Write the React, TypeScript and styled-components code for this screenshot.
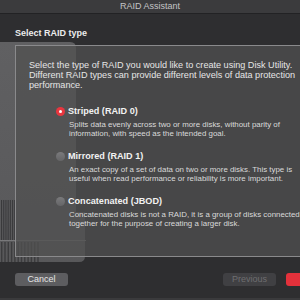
import React from "react";
import styled, { createGlobalStyle } from "styled-components";

const Global = createGlobalStyle`
  html, body { margin: 0; padding: 0; background: #2e2e30; }
  body { width: 300px; height: 300px; overflow: hidden; font-family: "Liberation Sans", Arial, sans-serif; }
  * { box-sizing: border-box; }
`;

const Window = styled.div`
  width: 300px;
  height: 300px;
  overflow: hidden;
  background: #2e2e30;
  display: flex;
  flex-direction: column;
`;

const TitleBar = styled.div`
  height: 14px;
  flex: none;
  background: #3b3b3d;
  border-bottom: 1px solid #222224;
  display: flex;
  align-items: center;
  justify-content: center;
  color: #c4c4c6;
  font-size: 9px;
  line-height: 13px;
`;

const SectionTitle = styled.div`
  padding: 14px 0 0 15px;
  height: 31px;
  flex: none;
  color: #ececec;
  font-size: 9px;
  font-weight: 700;
  line-height: 11px;
`;

const Stage = styled.div`
  position: relative;
  height: 212px;
  flex: none;
`;

const Art = styled.svg`
  position: absolute;
  left: 0;
  top: -3px;
  width: 90px;
  height: 220px;
`;

const Panel = styled.div`
  position: relative;
  height: 212px;
  margin: 0 -20px 0 15px;
  border: 1px solid #8a8a8c;
  background: rgba(80, 80, 80, 0.75);
  padding: 14px 0 0 13px;
`;

const Intro = styled.p`
  margin: 0;
  width: 275px;
  color: #e6e6e6;
  font-size: 9.1px;
  line-height: 10.2px;
`;

const Options = styled.div`
  margin: 15px 0 0 27px;
  display: flex;
  flex-direction: column;
  gap: 12.6px;
`;

const Option = styled.div`
  display: grid;
  grid-template-columns: 9px 1fr;
  column-gap: 3px;
  align-items: center;
`;

const Radio = styled.span<{ $on?: boolean }>`
  width: 9px;
  height: 9px;
  border-radius: 50%;
  background: ${(p) => (p.$on ? "#e8363f" : "linear-gradient(#7a7a7c, #656567)")};
  display: flex;
  align-items: center;
  justify-content: center;
  &::after {
    content: "";
    width: 3px;
    height: 3px;
    border-radius: 50%;
    background: #ffffff;
    display: ${(p) => (p.$on ? "block" : "none")};
  }
`;

const Label = styled.span`
  color: #f2f2f2;
  font-size: 9.1px;
  font-weight: 700;
  line-height: 11px;
`;

const Desc = styled.p`
  grid-column: 2;
  margin: 3px 0 0 1px;
  width: 240px;
  color: #dadada;
  font-size: 7.9px;
  line-height: 9.2px;
`;

const Footer = styled.div`
  flex: 1;
  display: flex;
  align-items: flex-start;
  padding: 16px 0 0 15px;
  border-bottom: 2px solid #3a3a3c;
`;

const Button = styled.button<{ $kind: "normal" | "disabled" | "primary" }>`
  width: 53px;
  height: 13px;
  border: none;
  border-radius: 3px;
  padding: 0;
  font-family: "Liberation Sans", Arial, sans-serif;
  font-size: 9px;
  line-height: 13px;
  flex: none;
  background: ${(p) => (p.$kind === "normal" ? "#5d5d60" : p.$kind === "disabled" ? "#404043" : "#e3313b")};
  color: ${(p) => (p.$kind === "normal" ? "#e6e6e6" : p.$kind === "disabled" ? "#6e6e70" : "#ffffff")};
`;

const Spacer = styled.div`
  flex: 1;
`;

const RightGroup = styled.div`
  display: flex;
  gap: 10px;
  margin-right: -39px;
`;

const options = [
  {
    label: "Striped (RAID 0)",
    on: true,
    desc: "Splits data evenly across two or more disks, without parity of information, with speed as the intended goal.",
  },
  {
    label: "Mirrored (RAID 1)",
    desc: "An exact copy of a set of data on two or more disks. This type is useful when read performance or reliability is more important.",
  },
  {
    label: "Concatenated (JBOD)",
    desc: "Concatenated disks is not a RAID, it is a group of disks connected together for the purpose of creating a larger disk.",
  },
];

export default function App() {
  return (
    <>
      <Global />
      <Window>
        <TitleBar>RAID Assistant</TitleBar>
        <SectionTitle>Select RAID type</SectionTitle>
        <Stage>
          <Art viewBox="0 0 90 220">
            <defs>
              <linearGradient id="body" x1="0" y1="0" x2="0" y2="1">
                <stop offset="0" stopColor="#606062" />
                <stop offset="1" stopColor="#58585a" />
              </linearGradient>
            </defs>
            <path d="M-10 0 H70 Q76 0 76 6 V170 H85 V214 Q85 220 79 220 H-10 Z" fill="url(#body)" />
            {Array.from({ length: 7 }).map((_, i) => (
              <rect key={"a" + i} x={1 + i * 2.2} y={158} width={1.1} height={40} fill="#3a3a3c" />
            ))}
            <rect x={0} y={198} width={86} height={1} fill="#78787a" />
            {Array.from({ length: 12 }).map((_, i) => (
              <rect key={"b" + i} x={1 + i * 3.3} y={200} width={1.4} height={20} fill="#3c3c3e" />
            ))}
          </Art>
          <Panel>
            <Intro>
              Select the type of RAID you would like to create using Disk Utility. Different RAID types can
              provide different levels of data protection performance.
            </Intro>
            <Options>
              {options.map((o) => (
                <Option key={o.label}>
                  <Radio $on={o.on} />
                  <Label>{o.label}</Label>
                  <Desc>{o.desc}</Desc>
                </Option>
              ))}
            </Options>
          </Panel>
        </Stage>
        <Footer>
          <Button $kind="normal">Cancel</Button>
          <Spacer />
          <RightGroup>
            <Button $kind="disabled">Previous</Button>
            <Button $kind="primary">Next</Button>
          </RightGroup>
        </Footer>
      </Window>
    </>
  );
}
